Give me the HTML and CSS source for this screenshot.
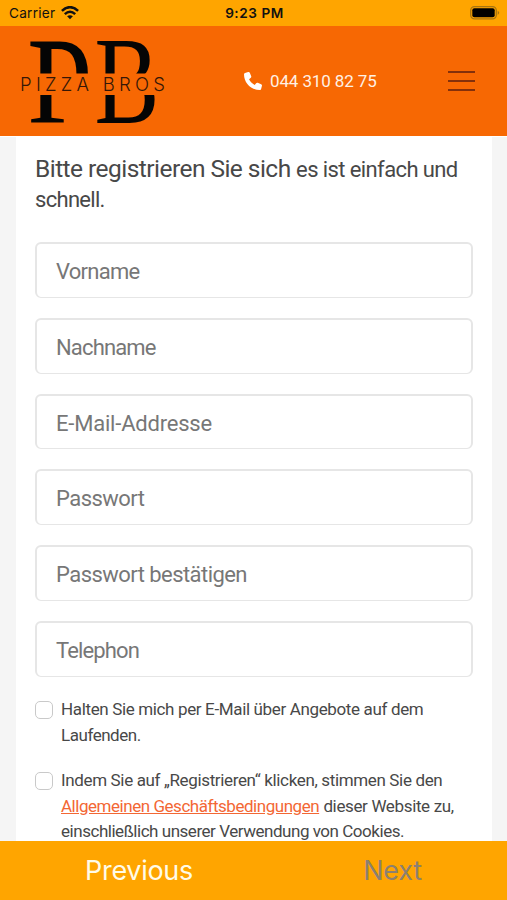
FILE: index.html
```html
<!DOCTYPE html>
<html lang="de">
<head>
<meta charset="utf-8">
<meta name="viewport" content="width=device-width, initial-scale=1">
<title>Pizza Bros</title>
<link rel="stylesheet" href="styles.css">
</head>
<body>
<div class="screen">
  <div class="status">
    <div class="carrier"><span>Carrier</span>
      <svg width="18" height="14" viewBox="0 0 18 14" fill="none" stroke="#111" stroke-width="2.5"><path d="M.9 4.9Q9-2.6 17.1 4.9"/><path d="M3.8 8.1Q9 3.3 14.2 8.1"/><path d="M9 13.2 6.1 10.3Q9 8.1 11.9 10.3Z" fill="#111" stroke="none"/></svg>
    </div>
    <time class="time">9:23 PM</time>
    <svg class="battery" width="30" height="14" viewBox="0 0 30 14"><rect x=".7" y=".7" width="25.6" height="12.2" rx="3.8" fill="none" stroke="#a87510" stroke-width="1.3"/><rect x="2.3" y="2.3" width="22.4" height="9" rx="2" fill="#000"/><path d="M27.7 4.7q3 2.1 0 4.2z" fill="#a87510"/></svg>
  </div>
  <header class="header">
    <svg class="logo" width="148" height="90" viewBox="0 0 148 90">
      <defs>
        <clipPath id="upper"><rect width="148" height="37.5"/></clipPath>
        <clipPath id="lower"><rect y="59" width="148" height="31"/></clipPath>
      </defs>
      <g class="monogram" clip-path="url(#upper)">
        <text transform="translate(7 118) scale(.96 1.4)">P</text>
        <text transform="translate(74.500 87) scale(.79 1.01)">B</text>
      </g>
      <g class="monogram" clip-path="url(#lower)" aria-hidden="true">
        <text transform="translate(7 87) scale(.96 1)">P</text>
        <text transform="translate(74.500 87) scale(.79 1)">B</text>
      </g>
      <text class="brand" x="0" y="55" textLength="145" lengthAdjust="spacing">PIZZA BROS</text>
    </svg>
    <div class="phone">
      <svg width="18" height="18" viewBox="0 0 512 512"><path fill="#fff" d="M164.900 24.600c-7.700-18.600-28-28.500-47.400-23.200l-88 24C12.100 30.200 0 46 0 64c0 247.400 200.600 448 448 448 18 0 33.800-12.100 38.600-29.500l24-88c5.300-19.400-4.600-39.700-23.200-47.400l-96-40c-16.300-6.800-35.200-2.100-46.300 11.600L304.700 368C234.300 334.700 177.300 277.700 144 207.300L193.300 167c13.700-11.200 18.400-30 11.600-46.300z"/></svg>
      <span>044 310 82 75</span>
    </div>
    <div class="menu"><i></i><i></i><i></i></div>
  </header>
  <main class="page">
    <form class="card">
      <h1 class="title"><span class="lead">Bitte registrieren Sie sich</span> <span class="l2">es ist einfach und</span><br><span class="l3">schnell.</span></h1>
      <div class="fields">
        <div class="field"><span class="f1">Vorname</span></div>
        <div class="field"><span class="f2">Nachname</span></div>
        <div class="field"><span class="f3">E-Mail-Addresse</span></div>
        <div class="field"><span class="f4">Passwort</span></div>
        <div class="field"><span class="f4">Passwort bestätigen</span></div>
        <div class="field"><span class="f2">Telephon</span></div>
      </div>
      <div class="check"><span class="box"></span><p><span class="c1">Halten Sie mich per E-Mail über Angebote auf dem</span><br><span class="c2">Laufenden.</span></p></div>
      <div class="check"><span class="box"></span><p><span class="c1">Indem Sie auf „Registrieren“ klicken, stimmen Sie den</span><br><a class="c2">Allgemeinen Geschäftsbedingungen</a> <span class="c1">dieser Website zu,</span><br><span class="c2">einschließlich unserer Verwendung von Cookies.</span></p></div>
    </form>
  </main>
  <footer class="nav"><span class="prev">Previous</span><span class="next">Next</span></footer>
</div>
</body>
</html>
```
FILE: styles.css
```css
* { box-sizing: border-box; }
body { margin: 0; font-family: Roboto, sans-serif; color: #484848; }
.screen { width: 507px; height: 900px; display: flex; flex-direction: column; overflow: hidden; background: #f5f5f5; }

.status { height: 25.5px; flex: none; background: #ffa500; color: #111; display: grid; grid-template-columns: 1fr auto 1fr; align-items: center; padding: 1px 7px 0 9px; font: 13.6px Inter, sans-serif; }
.carrier { display: flex; align-items: center; gap: 6px; letter-spacing: .25px; }
.time { font-weight: 600; letter-spacing: .55px; }
.battery { justify-self: end; }

.header { height: 110.5px; flex: none; background: #f76803; display: grid; grid-template-columns: 224px 204px 1fr; align-items: center; padding-left: 20px; }
.monogram { font: 123px "Liberation Serif", serif; fill: #050505; }
.brand { font: 300 18.500px Inter, sans-serif; fill: #351707; }
.phone { display: flex; align-items: center; gap: 8px; color: #fff1e5; font-size: 17px; letter-spacing: -.12px; white-space: nowrap; }
.menu { width: 27px; display: grid; gap: 7px; }
.menu i { height: 2px; background: #84300b; }

.page { flex: 1; min-height: 0; overflow: hidden; padding: 0 15px 0 16px; border-top: 1px solid #fff; }
.card { height: 720px; background: #fff; padding: 17px 19px 0; }
.title { margin: 0; font-weight: 400; font-size: 22px; line-height: 30px; white-space: nowrap; }
.lead { font-size: 24.500px; letter-spacing: -.54px; }
.l2 { letter-spacing: -.6px; }
.l3 { letter-spacing: -.7px; }
.fields { display: grid; gap: 20px; margin-top: 27px; }
.field { height: 55.8px; border: 2px solid #e6e6e6; border-bottom-width: 1.5px; border-radius: 6px; padding-left: 19px; font-size: 22px; line-height: 55.5px; color: #777; white-space: nowrap; }
.f1 { letter-spacing: -.75px; }
.f2 { letter-spacing: -.85px; }
.f3 { letter-spacing: -.2px; }
.f4 { letter-spacing: -.55px; }
.check { display: flex; gap: 8px; margin-top: 19.5px; font-size: 17px; line-height: 25.8px; white-space: nowrap; }
.fields + .check { margin-top: 20px; }
.check p { margin: 0; }
.c1 { letter-spacing: -.355px; }
.c2 { letter-spacing: -.465px; }
.box { width: 18px; height: 18px; margin-top: 4px; flex: none; border: 1.5px solid #c9c9c9; border-radius: 5px; }
.check a { color: #f36734; text-decoration: underline; }

.nav { height: 59.5px; flex: none; background: #ffa500; display: grid; grid-template-columns: 278px 1fr; align-items: center; text-align: center; font: 27px Inter, sans-serif; letter-spacing: -.3px; color: #fffbe8; padding-top: 1px; }
.next { color: #8b8072; justify-self: center; }
```
